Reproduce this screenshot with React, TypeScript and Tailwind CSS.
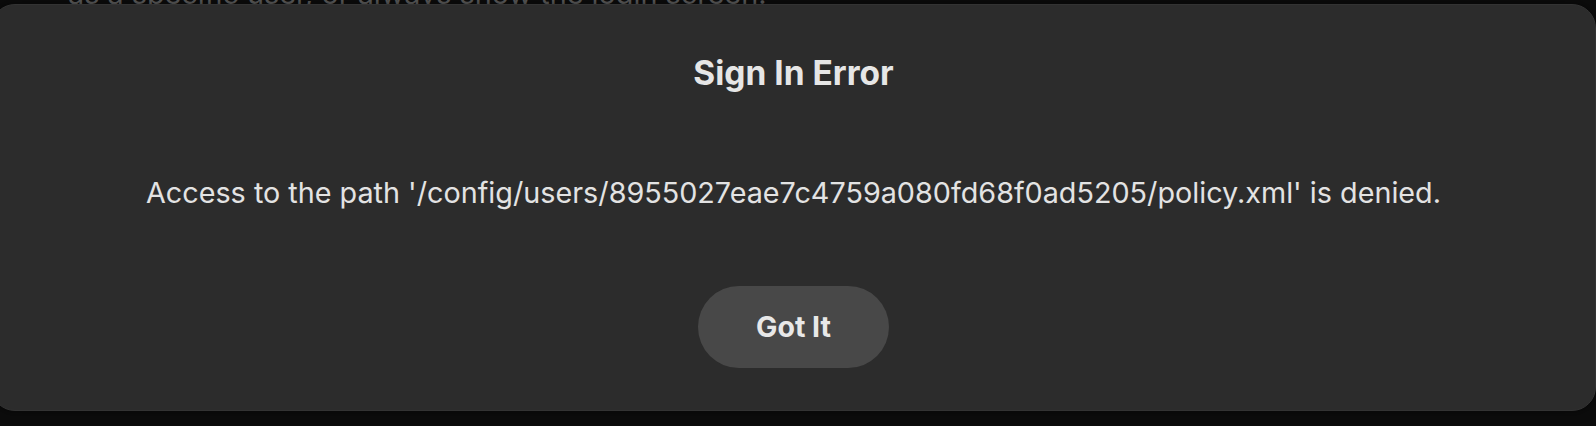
import React from "react";

export default function App() {
  return (
    <div
      className="relative w-full h-[426px] overflow-hidden bg-[#0c0c0c]"
      style={{ fontFamily: "Inter, 'Noto Sans', sans-serif" }}
    >
      <div className="pl-[68px] -mt-[24px] text-[28.8px] leading-[35px] text-[#5e5e5e]">
        as a specific user, or always show the login screen.
      </div>
      <div className="absolute left-[-9px] top-[4px] w-[1605px] h-[407px] rounded-[24px] bg-[#2c2c2c] border border-[#333333] shadow-[0_0_12px_rgba(0,0,0,0.5)] flex flex-col items-center">
        <h1 className="mt-[48px] text-[33.5px] leading-[40px] font-bold text-[#e6e6e6]">
          Sign In Error
        </h1>
        <p className="mt-[82px] text-[28.75px] leading-[35px] text-[#e3e3e3]">
          Access to the path '/config/users/8955027eae7c4759a080fd68f0ad5205/policy.xml' is denied.
        </p>
        <button className="mt-[76px] w-[191px] h-[82px] rounded-full bg-[#484848] text-[28.5px] font-bold text-[#e8e8e8]">
          Got It
        </button>
      </div>
    </div>
  );
}
